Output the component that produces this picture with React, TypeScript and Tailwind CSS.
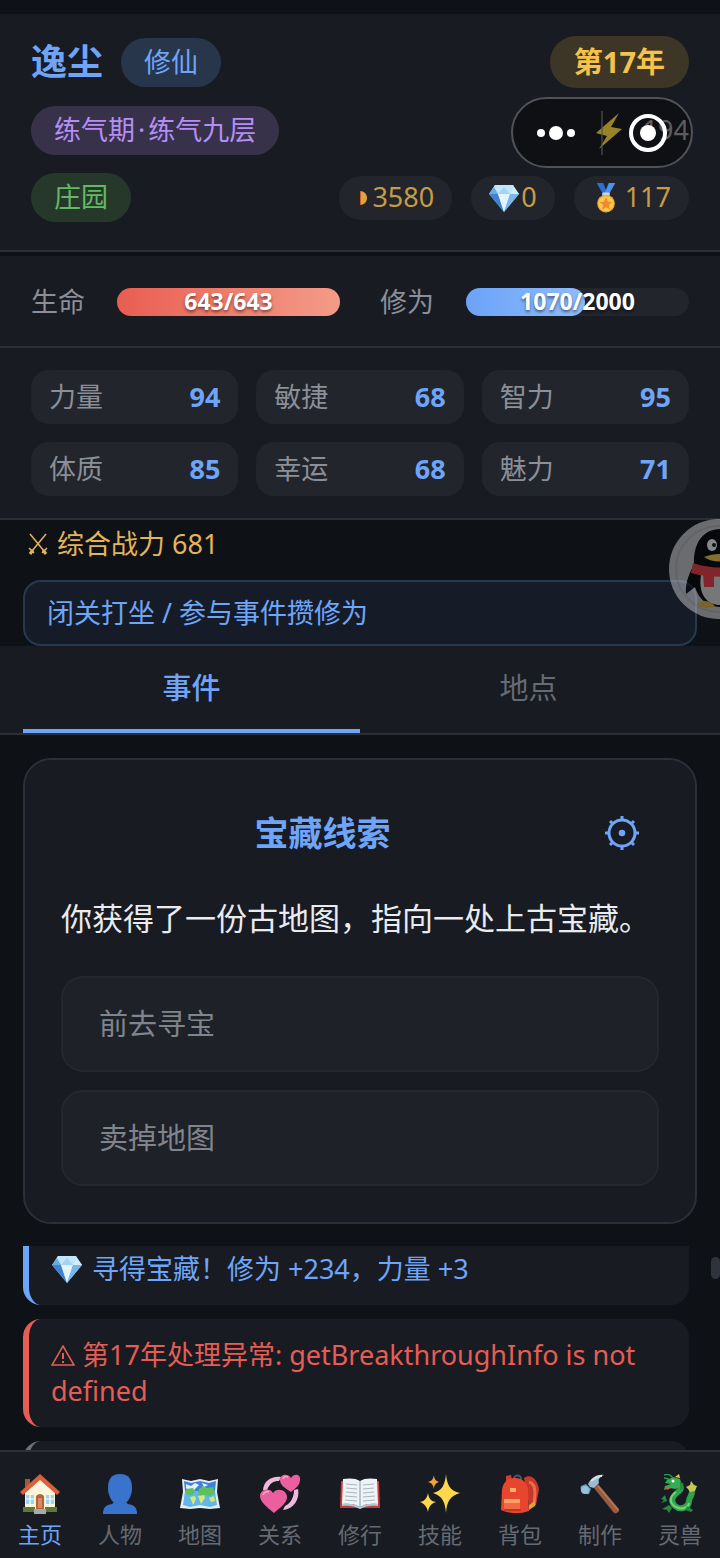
import React from 'react';

const DiamondIcon = ({ className }: { className: string }) => (
  <svg viewBox="0 0 30 28" className={className} aria-hidden="true">
    <path d="M6 1h18l6 9-15 18L0 10z" fill="#8cc4ee" />
    <path d="M6 1h18l2 4-5 5H9L3 6z" fill="#c3e5fa" />
    <path d="M9 10l6-7 6 7z" fill="#a4d3f4" />
    <path d="M0 10h9l6 18z" fill="#3f83cf" />
    <path d="M9 10h12l-6 18z" fill="#e4f4fd" />
    <path d="M21 10h9L15 28z" fill="#7ab7e8" />
    <path d="M0 10l5-7 4 7z" fill="#6aabe2" />
    <path d="M21 10l4-7 5 7z" fill="#d4edfb" />
  </svg>
);

const MedalIcon = () => (
  <svg viewBox="0 0 30 32" className="w-7 h-8 shrink-0" aria-hidden="true">
    <path d="M5 0h7l5 12-4 2z" fill="#2c6fd1" />
    <path d="M25 0h-7l-5 12 4 2z" fill="#4a93ee" />
    <rect x="11" y="10" width="8" height="4" rx="1" fill="#c9d4de" />
    <circle cx="15" cy="22" r="9.500" fill="#f0a92e" />
    <circle cx="15" cy="22" r="8" fill="#fbc950" />
    <path d="M15 15l2 5 5 .3-4 3.2 1.500 5.200L15 26l-4.500 2.700L12 23.500l-4-3.200 5-.3z" fill="#ef8a2b" />
  </svg>
);

const BoltIcon = () => (
  <svg viewBox="0 0 28 38" className="w-7 h-[38px] shrink-0" aria-hidden="true">
    <path d="M24 1L1 21l11 3-8 13 23-20-11-2z" fill="#ffdc3e" />
  </svg>
);

const CoinIcon = () => (
  <svg viewBox="0 0 8 14" className="w-2 h-[14px] shrink-0" aria-hidden="true">
    <path d="M1 0c4 0 7 3 7 7s-3 7-7 7z" fill="#e0a13c" />
    <path d="M1 0v14h1V0z" fill="#c4621e" />
  </svg>
);

const SwordsIcon = () => (
  <svg viewBox="0 0 22 24" className="w-[22px] h-6" fill="none" stroke="currentColor" strokeWidth="1.500" aria-hidden="true">
    <path d="M3 2l14 17M19 2L5 19M2 16l5 5M20 16l-5 5" />
    <path d="M3 22l3-4M19 22l-3-4" strokeWidth="3" />
  </svg>
);

const WarnIcon = () => (
  <svg viewBox="0 0 24 22" className="inline w-6 h-[22px] align-[-2px]" fill="none" stroke="currentColor" strokeWidth="1.500" aria-hidden="true">
    <path d="M12 1L23 20H1z" />
    <path d="M12 8v6M12 16v2" strokeWidth="2" />
  </svg>
);

const WheelIcon = () => (
  <svg viewBox="0 0 36 36" className="w-9 h-9" fill="none" stroke="currentColor" aria-hidden="true">
    <circle cx="18" cy="18" r="13" strokeWidth="3" />
    <circle cx="18" cy="18" r="3.300" fill="currentColor" stroke="none" />
    <path d="M18 1v4M18 31v4M1 18h4M31 18h4M6 6l3 3M27 27l3 3M30 6l-3 3M9 27l-3 3" strokeWidth="3" />
  </svg>
);

const HouseArt = () => (
  <>
    <path d="M5 5h5v10H5z" fill="#9c5a44" />
    <path d="M5 17L20 4l15 13v19H5z" fill="#fbf3dc" />
    <path d="M20 0L0 18l3 3L20 6l17 15 3-3z" fill="#d9603b" />
    <path d="M6 21h8v9H6zM26 21h8v9h-8z" fill="#9ed3ec" />
    <path d="M10 21v9M6 25h8M30 21v9M26 25h8" stroke="#fff" strokeWidth="1.200" />
    <path d="M16 35V22q4-4 8 0v13z" fill="#b5633c" />
    <path d="M18 34V24h4v10z" fill="#d88b5c" />
    <path d="M3 33h12v5H3zM25 33h12v5H25z" fill="#5c7a34" />
    <path d="M14 35h12v5H14z" fill="#a7a9ad" />
  </>
);

const PersonArt = () => (
  <>
    <path d="M20 0c9 0 12 6 12 14 0 7-3 12-6 15H14c-3-3-6-8-6-15C8 6 11 0 20 0z" fill="#3a73cb" />
    <path d="M3 40c0-7 3-9 9-10l4-3h8l4 3c6 1 9 3 9 10z" fill="#3a73cb" />
  </>
);

const MapArt = () => (
  <>
    <path d="M2 5l9 2 9-2 9 2 9-2-1 13 3 16-10 1-10-1-10 1-10-1 3-16z" fill="#e4eef2" />
    <path d="M4 7l7 2 9-2 9 2 7-2-1 10H5z" fill="#3f7fe0" />
    <path d="M5 17h30l2 14-7 2-10-2-10 2-7-2z" fill="#63b7e8" />
    <path d="M6 10l5 2 4-3 4 2-4 4-2 4-4-2-3-3z" fill="#e3f1f5" />
    <path d="M6 15l7-1 2 4-4 4-5-2zM19 15l4-3 4 2 6-1 2 6-5 3-5-1-4 2-3-4z" fill="#5cc05a" />
    <path d="M10 23l5-1 1 3-3 6zM18 22l6-1 1 3-4 6zM29 24l5-2 1 5-4 1z" fill="#d6e878" />
    <path d="M22 9l6 2-4 2z" fill="#f4fbff" />
  </>
);

const HeartsArt = () => (
  <>
    <path d="M3 16C4 7 11 2 21 3l-2 4c-6 0-9 2-12 9zM38 15c2 10-4 20-15 21l2-4c6-3 9-9 9-16z" fill="#eebadb" />
    <path d="M14 39C7 33 0 28 0 22c0-7 10-9 13-3 4-6 14-3 14 4 0 6-6 10-13 16z" fill="#ea5f9d" />
    <path d="M31 18c-6-4-11-7-11-12 0-6 8-7 11-2 3-5 10-4 9 2 0 5-4 8-9 12z" fill="#ea5f9d" />
    <path d="M3 21c1-3 4-4 6-3M23 5c1-3 3-3 5-2" stroke="#f9a4cb" strokeWidth="1.500" fill="none" />
  </>
);

const BookArt = () => (
  <>
    <path d="M1 7h38l1 27H22l-2 1-2-1H0z" fill="#c93b3b" />
    <path d="M3 5c6-1 13-1 17 2 4-3 11-3 17-2l1 25c-7-1-14 0-18 3-4-3-11-4-18-3z" fill="#eef4f6" />
    <path d="M20 7v26" stroke="#a9b9c2" strokeWidth="1.500" />
    <path d="M6 10l11 1M6 14l11 1M6 18l11 1M5 22l12 1M5 26l12 1M23 11l11-1M23 15l11-1M23 19l11-1M23 23l12-1M23 27l12-1" stroke="#a9b5bd" strokeWidth="1" />
    <path d="M2 30c7-1 14 0 18 3 4-3 11-4 18-3v2c-7-1-13 0-18 3-5-3-11-4-18-3z" fill="#a5cbd9" />
  </>
);

const SparklesArt = () => (
  <>
    <path d="M26 0c1 11 4 17 14 19-10 3-13 8-14 20-1-12-4-17-13-20 9-2 12-8 13-19z" fill="#fdd74c" />
    <path d="M8 19c1 5 2 8 8 9-6 2-7 5-8 10-1-5-3-8-8-10 5-1 7-4 8-9z" fill="#fdd74c" />
    <path d="M14 1c0 4 2 6 5 7-3 1-5 3-5 7-1-4-2-6-6-7 4-1 5-3 6-7z" fill="#f2a238" />
  </>
);

const BackpackArt = () => (
  <>
    <path d="M24 4c7-5 14 2 15 12l-3 15-6 3z" fill="#c63828" />
    <path d="M29 8c4 1 6 5 6 11l-1 12" stroke="#ee6a4f" strokeWidth="3" fill="none" />
    <path d="M14 6c-1-6 8-6 7 0" stroke="#46566b" strokeWidth="2" fill="none" />
    <path d="M6 2l5-1 1 5-6 3z" fill="#d33f2e" />
    <path d="M1 36l1-20C3 8 8 4 15 4s12 4 13 12l1 21q-14 5-28-1z" fill="#e8452f" />
    <path d="M10 14h6v4h-6z" fill="#f9b26b" />
    <path d="M4 26h16v9H4z" fill="#f06b43" />
    <path d="M4 25h16v4H4z" fill="#f9a069" />
    <path d="M4 36h17" stroke="#b93222" strokeWidth="1.500" />
    <path d="M29 31l6-4v5l-6 4z" fill="#d6a33c" />
  </>
);

const HammerArt = () => (
  <>
    <path d="M14 14l4-4 21 25c1 3-3 5-5 4z" fill="#965c3f" />
    <path d="M18 12l20 24" stroke="#b67a56" strokeWidth="1.500" />
    <path d="M8 10C12 3 17 0 24 1c-5 2-6 5-5 8l-5 5-4-1z" fill="#9dbccd" />
    <path d="M11 7c4-3 7-5 11-5" stroke="#d6e7ef" strokeWidth="2" fill="none" />
    <path d="M1 12l5-2 5 5-2 5c-5 1-10-4-8-8z" fill="#6f9cb9" />
    <circle cx="5" cy="16" r="4" fill="#8fc3e0" />
  </>
);

const DragonArt = () => (
  <>
    <path d="M15 10c6 1 8 4 3 8-6 5-8 9-3 14 6 5 14 1 14-5 0-4 4-6 3-11" stroke="#2fa24a" strokeWidth="6" fill="none" strokeLinecap="round" />
    <path d="M16 18c-7 5-7 11 0 15 6 3 12 1 13-4" stroke="#7cd27a" strokeWidth="2" fill="none" />
    <path d="M7 6l6-3 7 2 2 6-6 4-7-1-5 2 1-4 6-2-6-1z" fill="#36ad50" />
    <path d="M4 1c4-2 6 0 9 3M4 4c2 0 4 0 5 2" stroke="#2a9848" strokeWidth="1.500" fill="none" />
    <path d="M15 3l4-3 1 4z" fill="#efc04a" />
    <path d="M31 7l3 4 3 1-2 5-5 1-2-3-2-2 4-2z" fill="#c8c64c" />
    <path d="M20 8l4 2-2 2 2 3-4 1zM5 21l-4 4 3 1-3 3 6-2zM9 31l-7 4 5 1 2 3 3-5zM27 32l6 4-2 2-6-2z" fill="#248a40" />
    <path d="M5 13l6 1-4 2z" fill="#e0523f" />
    <circle cx="13" cy="7" r="1.500" fill="#fff" />
  </>
);

const PenguinIcon = () => (
  <svg viewBox="0 0 100 100" className="w-[100px] h-[100px] opacity-50" aria-hidden="true">
    <circle cx="50" cy="50" r="50" fill="#c6c7c9" />
    <circle cx="50" cy="50" r="43" fill="none" stroke="#b4b5b8" strokeWidth="2" />
    <path d="M25 46C24 24 34 10 52 10s30 14 28 36l8 28-11-4c-4 12-12 18-25 18s-22-7-26-20l-9 7c-1-10 3-21 8-29z" fill="#000" />
    <path d="M32 56h38c4 18-5 30-19 30S29 74 32 56z" fill="#dcdcdc" />
    <ellipse cx="43" cy="26" rx="5" ry="6" fill="#fff" />
    <ellipse cx="59" cy="26" rx="5" ry="6" fill="#fff" />
    <circle cx="45" cy="26" r="2" fill="#111" />
    <circle cx="57" cy="26" r="2" fill="#111" />
    <path d="M35 38c9-4 23-4 32 0-8 6-24 6-32 0z" fill="#f5cb48" />
    <path d="M24 44c17 6 38 6 55 0v10c-17 5-39 5-57 0z" fill="#f23a3e" />
    <path d="M34 54h11v14H35z" fill="#f23a3e" />
    <path d="M28 84c5-3 13-3 18 3-4 4-18 2-18-3z" fill="#e6b640" />
  </svg>
);

const stats = [
  { label: '力量', value: 94 },
  { label: '敏捷', value: 68 },
  { label: '智力', value: 95 },
  { label: '体质', value: 85 },
  { label: '幸运', value: 68 },
  { label: '魅力', value: 71 },
];

const bars = [
  { label: '生命', value: 643, max: 643, fill: 'from-[#e85d52] to-[#f39b88]' },
  { label: '修为', value: 1070, max: 2000, fill: 'from-[#6ba3f8] to-[#8fbcfa]' },
];

const navItems = [
  { label: '主页', art: HouseArt },
  { label: '人物', art: PersonArt },
  { label: '地图', art: MapArt },
  { label: '关系', art: HeartsArt },
  { label: '修行', art: BookArt },
  { label: '技能', art: SparklesArt },
  { label: '背包', art: BackpackArt },
  { label: '制作', art: HammerArt },
  { label: '灵兽', art: DragonArt },
];

const Header = () => (
  <header className="bg-[#181b22] border-b-2 border-[#2c2f36] px-[31px] pt-[22px] pb-7">
    <div className="flex items-center justify-between h-[52px]">
      <div className="flex items-center gap-[18px]">
        <h1 className="text-[36px] leading-[48px] font-bold text-[#6fa5f8]">逸尘</h1>
        <span className="h-[49px] px-[23px] flex items-center rounded-full bg-[#27364b] text-[27px] text-[#6fa5f8]">修仙</span>
      </div>
      <span className="h-[52px] px-6 flex items-center rounded-full bg-[#3d3626] text-[29px] font-bold text-[#f5c34a]">第17年</span>
    </div>
    <div className="mt-[18px] flex items-center justify-between h-[49px]">
      <span className="h-[49px] px-[23px] flex items-center rounded-full bg-[#37314a] text-[27px] text-[#b48ef7]">
        练气期<span className="mx-[3px]">·</span>练气九层
      </span>
      <span className="flex items-center gap-5 text-[27px] text-[#9a9ca1]">
        <BoltIcon />
        194
      </span>
    </div>
    <div className="mt-[18px] flex items-center justify-between h-[49px]">
      <span className="h-[49px] px-[23px] flex items-center rounded-full bg-[#25382a] text-[27px] text-[#65b865]">庄园</span>
      <div className="flex gap-[19px] text-[27px] text-[#c89b45]">
        <span className="h-11 pl-5 pr-[18px] flex items-center gap-[5px] rounded-full bg-[#22252c]">
          <CoinIcon />
          3580
        </span>
        <span className="h-11 px-[18px] flex items-center gap-[2px] rounded-full bg-[#22252c]">
          <DiamondIcon className="w-[30px] h-7 shrink-0" />
          0
        </span>
        <span className="h-11 px-[18px] flex items-center gap-[5px] rounded-full bg-[#22252c]">
          <MedalIcon />
          117
        </span>
      </div>
    </div>
  </header>
);

const StatusBars = () => (
  <section className="mt-1 bg-[#181b22] border-b-2 border-[#2c2f36] px-[31px] pt-7 pb-[27px] flex gap-10">
    {bars.map((bar) => (
      <div key={bar.label} className="flex-1 flex items-center gap-8">
        <span className="text-[27px] leading-[35px] text-[#8b8f98]">{bar.label}</span>
        <div className="relative flex-1 h-7 rounded-full bg-[#22252c]">
          <div className={`h-full rounded-full bg-linear-to-r ${bar.fill}`} style={{ width: `${(bar.value / bar.max) * 100}%` }}></div>
          <span className="absolute inset-0 flex items-center justify-center text-[23px] font-bold text-white [text-shadow:0_2px_3px_rgba(0,0,0,0.5)]">
            {`${bar.value}/${bar.max}`}
          </span>
        </div>
      </div>
    ))}
  </section>
);

const StatGrid = () => (
  <section className="bg-[#181b22] border-b-2 border-[#2c2f36] px-[31px] py-[22px] grid grid-cols-3 gap-[18px]">
    {stats.map((stat) => (
      <div key={stat.label} className="h-[54px] px-[18px] flex items-center justify-between rounded-[18px] bg-[#22252c] text-[27px]">
        <span className="text-[#8b8f98]">{stat.label}</span>
        <span className="font-bold text-[#6fa5f8]">{stat.value}</span>
      </div>
    ))}
  </section>
);

const EventCard = () => (
  <section className="mx-[23px] mt-[23px] p-9 bg-[#181b22] border-2 border-[#2c2f36] rounded-[28px]">
    <div className="flex items-center h-[74px]">
      <h2 className="flex-1 text-center text-[34px] font-bold text-[#6fa5f8]">宝藏线索</h2>
      <button type="button" aria-label="设置" className="w-[75px] h-[74px] flex items-center justify-center text-[#6fa5f8]">
        <WheelIcon />
      </button>
    </div>
    <p className="mt-5 mb-[30px] text-[31px] leading-[56px] text-[#e9ebef]">你获得了一份古地图，指向一处上古宝藏。</p>
    <div className="flex flex-col gap-[18px]">
      <button type="button" className="h-24 px-9 text-left text-[29px] text-[#80848c] bg-[#1e2128] border-2 border-[#24272e] rounded-[22px]">前去寻宝</button>
      <button type="button" className="h-24 px-9 text-left text-[29px] text-[#80848c] bg-[#1e2128] border-2 border-[#24272e] rounded-[22px]">卖掉地图</button>
    </div>
  </section>
);

const EventLog = () => (
  <section className="relative flex-1 min-h-0 overflow-hidden mt-[22px] pl-[23px] pr-[31px]">
    <div className="flex flex-col gap-[14px] text-[27px] leading-9">
      <p className="pt-[5px] pb-[18px] px-[23px] flex items-center gap-[10px] bg-[#181b22] border-l-[6px] border-[#6fa5f8] rounded-b-[18px] text-[#6fa5f8]">
        <DiamondIcon className="w-[30px] h-7" />
        寻得宝藏！修为 +234，力量 +3
      </p>
      <p className="py-[18px] px-[22px] bg-[#181b22] border-l-[6px] border-[#e55d54] rounded-[18px] text-[#e55d54]">
        <WarnIcon /> 第17年处理异常: getBreakthroughInfo is not defined
      </p>
      <div className="h-[72px] bg-[#181b22] border-l-[6px] border-[#6d7077] rounded-[18px]"></div>
    </div>
    <div className="absolute right-0 top-[11px] w-[9px] h-[22px] rounded-full bg-[#2f333b]"></div>
  </section>
);

const BottomNav = () => (
  <nav className="shrink-0 grid grid-cols-9 h-[108px] pt-[22px] bg-[#181b22] border-t-2 border-[#2c2f36]">
    {navItems.map((item, index) => {
      const Art = item.art;
      return (
        <a key={item.label} href="#" className={`flex flex-col items-center gap-1 text-[22px] leading-8 ${index === 0 ? 'text-[#6fa5f8]' : 'text-[#666a72]'}`}>
          <svg viewBox="0 0 40 40" className="w-10 h-10" aria-hidden="true">
            <Art />
          </svg>
          {item.label}
        </a>
      );
    })}
  </nav>
);

const App = () => {
  return (
    <div className="relative h-screen overflow-hidden flex flex-col pt-[14px] bg-[#0e1116] font-['Noto_Sans','Noto_Sans_CJK_SC',sans-serif]">
      <Header />
      <StatusBars />
      <StatGrid />

      {/* Combat power + hint */}
      <div className="px-[23px]">
        <p className="h-12 px-1 flex items-center gap-2 text-[27px] text-[#e3b558]">
          <SwordsIcon />
          综合战力 681
        </p>
        <p className="mt-3 px-[22px] py-3 border-2 border-[#263951] rounded-[18px] bg-[#151c27] text-[27px] leading-[38px] text-[#6fa5f8]">
          闭关打坐 / 参与事件攒修为
        </p>
      </div>

      {/* Tabs */}
      <div className="flex px-[23px] bg-[#181b22] border-b-2 border-[#2c2f36]">
        <button type="button" className="flex-1 h-[87px] text-[29px] font-medium text-[#6fa5f8] border-b-4 border-[#6fa5f8]">事件</button>
        <button type="button" className="flex-1 h-[87px] text-[29px] text-[#666a72] border-b-4 border-transparent">地点</button>
      </div>

      <EventCard />
      <EventLog />
      <BottomNav />

      {/* Mini program capsule */}
      <div className="absolute right-[27px] top-[97px] w-[182px] h-[71px] flex items-center justify-between pl-6 pr-6 rounded-full bg-black/40 border-2 border-[#505255]">
        <button type="button" aria-label="更多" className="flex items-center gap-1">
          <span className="w-2 h-2 rounded-full bg-white"></span>
          <span className="w-[14px] h-[14px] rounded-full bg-white"></span>
          <span className="w-2 h-2 rounded-full bg-white"></span>
        </button>
        <span className="w-[2px] h-11 bg-[#505255]/60"></span>
        <button type="button" aria-label="关闭" className="w-[38px] h-[38px] flex items-center justify-center rounded-full border-4 border-white">
          <span className="w-4 h-4 rounded-full bg-white"></span>
        </button>
      </div>

      {/* Floating chat bubble */}
      <div className="absolute -right-[49px] top-[519px]">
        <PenguinIcon />
      </div>
    </div>
  );
};

export default App;
